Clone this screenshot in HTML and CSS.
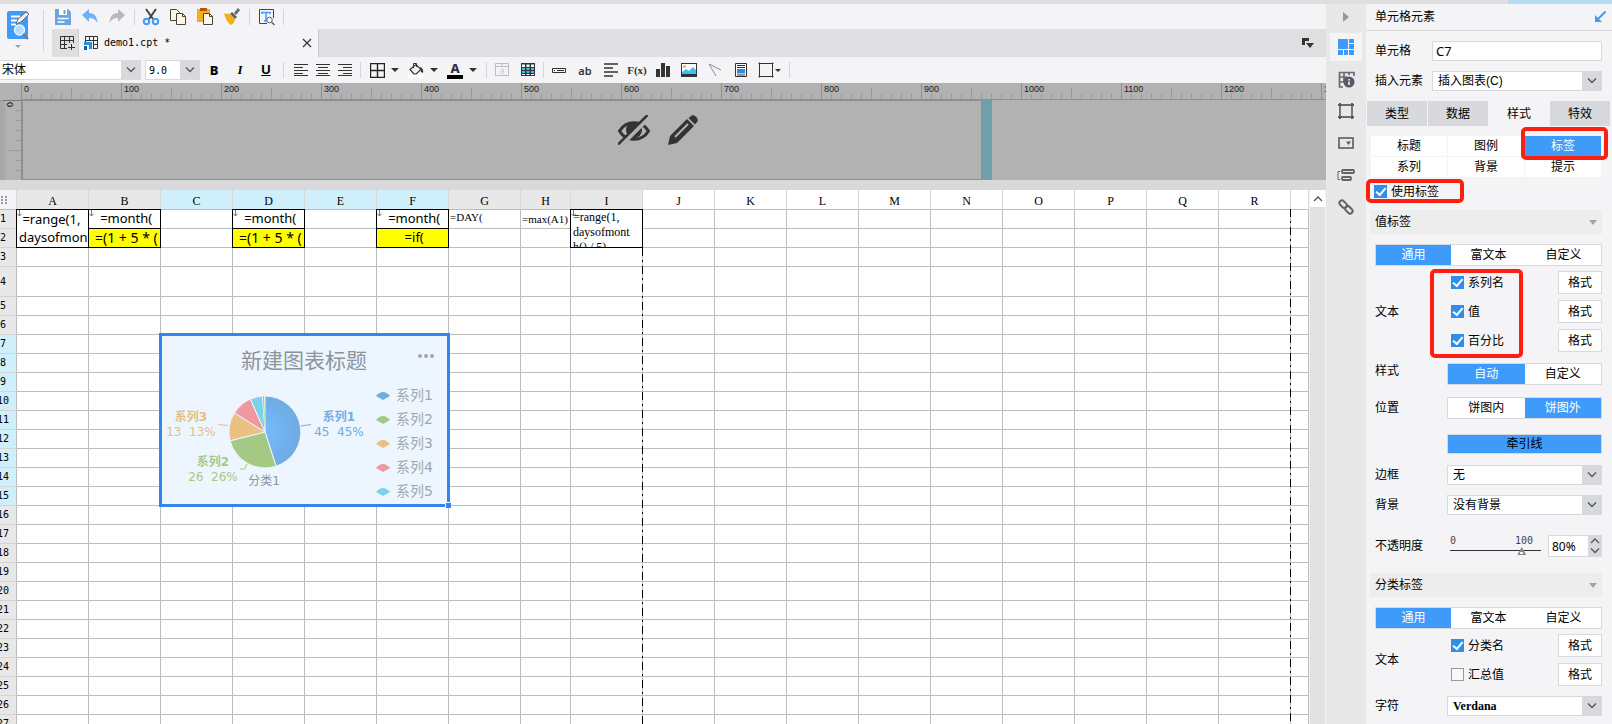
FILE: index.html
```html
<!DOCTYPE html>
<html lang="zh-CN">
<head>
<meta charset="utf-8">
<title>demo1.cpt</title>
<link rel="stylesheet" href="styles.css">
</head>
<body>
<div class="strip"><div class="strip-accent"></div></div>
<div class="app">
  <main class="editor">
    <header class="header">
      <button class="logo" aria-label="模板">
        <svg width="24" height="38" viewBox="0 0 24 38">
          <rect x="1" y="1" width="21" height="28" rx="2" fill="#3e9bfa"/>
          <path d="M5 6.500h9M5 10.500h7M5 14.500h5" stroke="#fff" stroke-width="2"/>
          <path d="M10 14l2-5 8-7 3 2-8 8z" fill="#f3f3f3" stroke="#666d75" stroke-width="1"/>
          <circle cx="13.500" cy="20" r="5" fill="#b9dbfb" stroke="#e9f3fd" stroke-width="1.500"/>
          <path d="M17 24l5 5" stroke="#6c7c8c" stroke-width="2"/>
          <path d="M9 35h6l-3 3z" fill="#9c9c9e"/>
        </svg>
      </button>
      <span class="sep sep-tall"></span>
      <div class="header-main">
        <div class="quickbar">
          <button class="tool" aria-label="保存"><svg width="18" height="18" viewBox="0 0 18 18"><path d="M1 1h13l3 3v13H1z" fill="#6aa5e2"/><path d="M5 1h8v6H5z" fill="#fff"/><path d="M9.500 2h2v4h-2z" fill="#6aa5e2"/><path d="M3.500 10.500h11M3.500 14h7" stroke="#fff" stroke-width="1.500"/></svg></button>
          <button class="tool" aria-label="撤销"><svg width="18" height="18" viewBox="0 0 18 18"><path d="M1 7l7-6v4c6 0 8 4 8.500 10C14 11 12 10 8 10v4z" fill="#6fb1f5"/></svg></button>
          <button class="tool" aria-label="重做"><svg width="18" height="18" viewBox="0 0 18 18"><path d="M17 7l-7-6v4c-6 0-8 4-8.500 10C4 11 6 10 10 10v4z" fill="#b9b9bb"/></svg></button>
          <span class="sep"></span>
          <button class="tool" aria-label="剪切"><svg width="18" height="18" viewBox="0 0 18 18"><path d="M4 1l7 10M14 1L7 11" stroke="#444" stroke-width="2"/><circle cx="4.500" cy="13.500" r="2.700" fill="none" stroke="#3e9bfa" stroke-width="2"/><circle cx="13.500" cy="13.500" r="2.700" fill="none" stroke="#3e9bfa" stroke-width="2"/></svg></button>
          <button class="tool" aria-label="复制"><svg width="18" height="18" viewBox="0 0 18 18" fill="#fff6df" stroke="#444"><path d="M1.500 1.500h6l3 3v8h-9z"/><path d="M7.500 5.500h6l3 3v8h-9z"/><path d="M13.500 5.500v3h3" fill="none"/></svg></button>
          <button class="tool" aria-label="粘贴"><svg width="18" height="18" viewBox="0 0 18 18"><path d="M1 1h13v13H1z" fill="#f2ae1c"/><path d="M4 0h7v3H4z" fill="#b35a0c"/><path d="M7.500 5.500h6l3 3v8h-9z" fill="#fff6df" stroke="#444"/><path d="M13.500 5.500v3h3" fill="none" stroke="#444"/></svg></button>
          <button class="tool" aria-label="格式刷"><svg width="18" height="18" viewBox="0 0 18 18"><path d="M12 6l4-5" stroke="#6b727c" stroke-width="3"/><path d="M9 4l5 5-2 2-5-5z" fill="#5a6068"/><path d="M1 5.500l6 .5 5 5c0 3-2 5-4 6-3-2-5-5-7-11.500z" fill="#f2ae1c"/></svg></button>
          <span class="sep"></span>
          <button class="tool" aria-label="预览"><svg width="18" height="18" viewBox="0 0 18 18"><path d="M16.500 10V1.500h-14v14H10" fill="none" stroke="#444"/><path d="M5 6V4.500h8V6M9 5v8M7 13h3" fill="none" stroke="#3e9bfa" stroke-width="1.500"/><circle cx="12.500" cy="12" r="2.800" fill="#f4f4f6" stroke="#666"/><path d="M14.500 14l3 3" stroke="#666" stroke-width="1.500"/></svg></button>
          <span class="sep"></span>
        </div>
        <div class="filebar">
          <button class="filenew" aria-label="新建"><svg width="16" height="16" viewBox="0 0 16 16" fill="none" stroke="#333"><path d="M14.500 8V1.500h-13v12H8M1.500 5.500h13M1.500 9.500H8M5.500 1.500v12M10.500 1.500V8M12.500 9v6M9 12.500h7"/></svg></button>
          <div class="filetab">
            <svg width="16" height="16" viewBox="0 0 16 16"><path d="M2 1.500h12.500v12H10M2 5.500h12.500M10 9.500h4.500M2.500 1v6M6.500 1v5M10.500 1v13" fill="none" stroke="#333"/><path d="M1 7h8v7H6v-4H1z" fill="#2a90d8"/><path d="M1 11h3v4H1z" fill="#155e98"/></svg>
            <span class="filename">demo1.cpt *</span>
            <button class="close" aria-label="关闭"><svg width="10" height="10" viewBox="0 0 10 10"><path d="M1 1l8 8M9 1l-8 8" stroke="#333" stroke-width="1.200"/></svg></button>
          </div>
          <button class="filemenu" aria-label="文件列表"><svg width="13" height="11" viewBox="0 0 13 11"><path d="M0 0h7v3H3v4H0z" fill="#333"/><path d="M4 5h8l-4 5z" fill="#333"/></svg></button>
        </div>
      </div>
    </header>

    <div class="formatbar">
      <span class="pick font-pick"><select aria-label="字体"><option>宋体</option></select><svg class="chev" width="10" height="6" viewBox="0 0 10 6"><path d="M1 .5l4 4 4-4"/></svg></span>
      <span class="pick size-pick"><select aria-label="字号"><option>9.0</option></select><svg class="chev" width="10" height="6" viewBox="0 0 10 6"><path d="M1 .5l4 4 4-4"/></svg></span>
      <button class="fmt"><b>B</b></button>
      <button class="fmt"><i>I</i></button>
      <button class="fmt"><u>U</u></button>
      <span class="sep"></span>
      <button class="fmt align" aria-label="左对齐"><svg width="14" height="12" viewBox="0 0 14 12"><path d="M0 .5h14M0 3.500h9M0 6.500h14M0 9.500h9M0 11.500h14" stroke="#333"/></svg></button>
      <button class="fmt align" aria-label="居中"><svg width="14" height="12" viewBox="0 0 14 12"><path d="M0 .5h14M2 3.500h10M0 6.500h14M2 9.500h10M0 11.500h14" stroke="#333"/></svg></button>
      <button class="fmt align" aria-label="右对齐"><svg width="14" height="12" viewBox="0 0 14 12"><path d="M0 .5h14M5 3.500h9M0 6.500h14M5 9.500h9M0 11.500h14" stroke="#333"/></svg></button>
      <span class="sep"></span>
      <button class="fmt split" aria-label="边框"><svg width="15" height="15" viewBox="0 0 15 15"><path d="M.5 .5h14v14H.5zM7.500 0v15M0 7.500h15" fill="none" stroke="#222" stroke-width="1.400"/></svg><span class="caret"></span></button>
      <button class="fmt split" aria-label="填充"><svg width="16" height="16" viewBox="0 0 16 16"><path d="M0 12.500h16V16H0z" fill="#fff"/><path d="M2 7.500l6-5 5 5-5 4.500H6z" fill="none" stroke="#333" stroke-width="1.200"/><path d="M5.500 6V1.500h3V5" fill="none" stroke="#333"/><path d="M12 5c3 1 3.500 4 3 6l-2-1z" fill="#333"/></svg><span class="caret"></span></button>
      <button class="fmt split" aria-label="字体颜色"><span class="fontcolor">A</span><span class="caret"></span></button>
      <span class="sep sep-gap"></span>
      <button class="fmt ins" aria-label="合并"><svg width="14" height="14" viewBox="0 0 14 14" fill="none" stroke="#bdbdbf"><path d="M.5 .5h13v12H.5zM0 3.500h14M7 0v3"/><path d="M5 6.500h3.500v4H5.500v-2h3" stroke="#d5d5d7"/></svg></button>
      <button class="fmt ins" aria-label="表格"><svg width="14" height="14" viewBox="0 0 14 14"><path d="M0 0h14v13H0z" fill="#333"/><path d="M1 1.500h3V4H1zM5.500 1.500h3V4h-3zM10 1.500h3V4h-3zM1 11h3v1H1zM5.500 11h3v1h-3zM10 11h3v1h-3z" fill="#fff"/><path d="M1 5h3v2H1zM5.500 5h3v2h-3zM10 5h3v2h-3zM1 8h3v2H1zM5.500 8h3v2h-3zM10 8h3v2h-3z" fill="#3fc0f5"/></svg></button>
      <span class="sep sep-gap"></span>
      <button class="fmt ins" aria-label="控件"><svg width="14" height="5" viewBox="0 0 14 5" fill="none" stroke="#333"><path d="M.5 .5h13v4H.5zM2 2.500h1M5 2.500h7"/></svg></button>
      <button class="fmt ins ab">ab</button>
      <button class="fmt ins" aria-label="富文本"><svg width="14" height="14" viewBox="0 0 14 14"><path d="M0 1h14M0 5h9M0 9h14M0 13h9" stroke="#333" stroke-width="1.600"/></svg></button>
      <button class="fmt ins fx">F(x)</button>
      <button class="fmt ins" aria-label="图表"><svg width="14" height="14" viewBox="0 0 14 14"><path d="M0 6h4v8H0zM5 0h4v14H5zM10 3h4v11h-4z" fill="#333"/></svg></button>
      <button class="fmt ins" aria-label="图片"><svg width="16" height="14" viewBox="0 0 16 14"><path d="M0 0h16v14H0z" fill="#333"/><path d="M1 1h14v9H1z" fill="#fff"/><path d="M1 11V9l4-3 3 2 4-4 3 3v4z" fill="#3fc0f5"/><circle cx="3.500" cy="3.500" r="1.500" fill="#f8b62c"/></svg></button>
      <button class="fmt ins" aria-label="斜线"><svg width="14" height="14" viewBox="0 0 14 14"><path d="M1 1l12 6M1 1l7 12" stroke="#8d8d90"/></svg></button>
      <button class="fmt ins" aria-label="子报表"><svg width="12" height="14" viewBox="0 0 12 14"><path d="M.5 .5h11v13H.5z" fill="#fff" stroke="#333"/><path d="M2 2.500h8M2 4.500h8M2 12h8" stroke="#333"/><path d="M2 6h8v4.500H2z" fill="#2d8ce0"/></svg></button>
      <button class="fmt ins last" aria-label="悬浮元素"><svg width="16" height="16" viewBox="0 0 16 16" fill="none" stroke="#333"><path d="M1.500 0v16M14.500 0v16M0 1.500h16M0 14.500h16" stroke="#888"/><path d="M1.500 1.500h13v13h-13z"/></svg><span class="caret small"></span></button>
      <span class="sep"></span>
    </div>

    <section class="banner">
      <div class="ruler-x">
        <span>0</span><span>100</span><span>200</span><span>300</span><span>400</span><span>500</span><span>600</span><span>700</span><span>800</span><span>900</span><span>1000</span><span>1100</span><span>1200</span><span>1300</span>
      </div>
      <div class="banner-body">
        <div class="ruler-y"><span>0</span></div>
        <div class="form-area">
          <button class="form-icon" aria-label="隐藏"><svg width="32" height="30" viewBox="0 0 32 30"><path d="M1.500 16C8 5 24 5 30.500 16 24 27 8 27 1.500 16z" fill="none" stroke="#333" stroke-width="3"/><circle cx="16" cy="15" r="8" fill="#333"/><path d="M2 31L31 2" stroke="#b2b2b2" stroke-width="5"/><path d="M0 29.500L29.500 0" stroke="#333" stroke-width="2.500"/></svg></button>
          <button class="form-icon" aria-label="编辑"><svg width="30" height="30" viewBox="0 0 30 30"><path d="M0 30l2-9L19 4l7 7L9 28z" fill="#333"/><path d="M7 22L20 9" stroke="#b2b2b2" stroke-width="2"/><path d="M20.500 3l3-2.300c3-1.500 7 2.300 6 5.800L27 9.500z" fill="#333"/></svg></button>
        </div>
        <div class="form-handle"></div>
      </div>
    </section>

    <section class="sheet">
      <div class="sheet-view">
        <table class="grid">
          <colgroup>
            <col class="c-num"><col class="c"><col class="c"><col class="c"><col class="c"><col class="c"><col class="c"><col class="c"><col class="c-h"><col class="c"><col class="c"><col class="c"><col class="c"><col class="c"><col class="c"><col class="c"><col class="c"><col class="c"><col class="c"><col>
          </colgroup>
          <thead>
            <tr>
              <th class="corner"><svg width="6" height="8" viewBox="0 0 6 8"><path d="M0 0h2v2H0zM4 0h2v2H4zM0 3h2v2H0zM4 3h2v2H4zM0 6h2v2H0zM4 6h2v2H4z" fill="#999"/></svg></th>
              <th class="used">A</th><th class="used">B</th><th class="hot">C</th><th class="hot">D</th><th class="hot">E</th><th class="hot">F</th><th class="used">G</th><th class="used">H</th><th class="used">I</th><th>J</th><th>K</th><th>L</th><th>M</th><th>N</th><th>O</th><th>P</th><th>Q</th><th>R</th><th></th>
            </tr>
          </thead>
          <tbody id="rows"></tbody>
        </table>
        <div class="page-break break-a"></div>
        <div class="page-break break-b"></div>
        <div class="chart">
          <svg class="chart-svg" viewBox="1 1 285 168" width="285" height="168">
            <defs><radialGradient id="blue" gradientUnits="userSpaceOnUse" cx="104" cy="97" r="36"><stop offset="0.1" stop-color="#74b8fb"/><stop offset="1" stop-color="#70abe2"/></radialGradient></defs>
            <text class="t-title" x="80" y="33">新建图表标题</text>
            <g fill="#a0a7ae"><circle cx="259" cy="21" r="2"/><circle cx="265" cy="21" r="2"/><circle cx="271" cy="21" r="2"/></g>
            <g stroke="#edf6fe" stroke-width="1">
              <path d="M104 97V61A36 36 0 0 1 115.100 131.200z" fill="url(#blue)"/>
              <path d="M104 97L115.100 131.200A36 36 0 0 1 69.100 105.700z" fill="#a4c985"/>
              <path d="M104 97L69.100 105.700A36 36 0 0 1 73.500 77.900z" fill="#eac083"/>
              <path d="M104 97L73.500 77.900A36 36 0 0 1 89.400 64.100z" fill="#ef98a0"/>
              <path d="M104 97L89.400 64.100A36 36 0 0 1 101.500 61.100z" fill="#7bd2ea"/>
            </g>
            <path d="M104 97L101.800 61.100A36 36 0 0 1 103.100 61z" fill="#a4c985"/>
            <g fill="none" stroke-width="1"><path d="M140 91l10-1.500" stroke="#70abe2"/><path d="M67 90.500l-10-1" stroke="#eac083"/><path d="M86 129l-2 5h-5" stroke="#a4c985"/></g>
            <g text-anchor="middle">
              <g fill="#73abe2"><text class="t-name" x="178" y="86">系列1</text><text class="t-val" x="178" y="101">45&#160; 45%</text></g>
              <g fill="#e8bd84"><text class="t-name" x="30" y="86">系列3</text><text class="t-val" x="30" y="101">13&#160; 13%</text></g>
              <g fill="#a4c985"><text class="t-name" x="52" y="131">系列2</text><text class="t-val" x="52" y="146">26&#160; 26%</text></g>
              <text class="t-cat" x="103" y="150">分类1</text>
            </g>
            <g>
              <path d="M215 61q7-8 14 0l-7 4z" fill="#70abe2"/><path d="M215 85q7-8 14 0l-7 4z" fill="#a4c985"/><path d="M215 109q7-8 14 0l-7 4z" fill="#eac083"/><path d="M215 133q7-8 14 0l-7 4z" fill="#ef98a0"/><path d="M215 157q7-8 14 0l-7 4z" fill="#7bd2ea"/>
            </g>
            <g class="t-legend"><text x="235" y="65">系列1</text><text x="235" y="89">系列2</text><text x="235" y="113">系列3</text><text x="235" y="137">系列4</text><text x="235" y="161">系列5</text></g>
          </svg>
          <span class="handle"></span>
        </div>
      </div>
      <div class="scrollbar"><button class="scroll-up" aria-label="向上"><svg class="chev" width="10" height="6" viewBox="0 0 10 6"><path d="M1 5l4-4 4 4"/></svg></button></div>
    </section>
  </main>

  <nav class="rail">
    <button class="rail-top" aria-label="收起"><svg width="6" height="10" viewBox="0 0 6 10"><path d="M0 0l6 5-6 5z" fill="#97979a"/></svg></button>
    <button class="rail-item on" aria-label="单元格元素"><svg width="16" height="16" viewBox="0 0 16 16" fill="#3e9bfa"><path d="M0 0h10v10H0zM11 0h5v4h-5zM11 5h5v5h-5zM0 11h5v5H0zM6 11h4v5H6zM11 11h5v5h-5z"/></svg></button>
    <button class="rail-item" aria-label="单元格属性"><svg width="17" height="17" viewBox="0 0 17 17"><path d="M1 1.500h15V5M1.500 1v15H5M1 6h8M1 11h5M6 1v10M11 1v3" fill="none" stroke="#666b76" stroke-width="1.700"/><circle cx="11" cy="11" r="5.500" fill="#555a64"/><path d="M11 8v1.500M11 10.500V14" stroke="#e8e8e8" stroke-width="1.700"/></svg></button>
    <button class="rail-item" aria-label="悬浮元素"><svg width="16" height="16" viewBox="0 0 16 16" fill="#555a64"><path d="M2 2h12v12H2z" fill="none" stroke="#666b76" stroke-width="1.800"/><path d="M0 1h3v2H0zM13 1h3v2h-3zM0 13h3v2H0zM13 13h3v2h-3zM1 0h2v3H1zM13 0h2v3h-2zM1 13h2v3H1zM13 13h2v3h-2z"/></svg></button>
    <button class="rail-item" aria-label="控件设置"><svg width="16" height="12" viewBox="0 0 16 12"><rect x="1" y="1" width="14" height="10" fill="none" stroke="#666b76" stroke-width="1.800"/><path d="M8 4.500h5L10.500 8z" fill="#555a64"/></svg></button>
    <button class="rail-item" aria-label="条件属性"><svg width="18" height="12" viewBox="0 0 18 12" fill="none" stroke="#5e636e" stroke-width="1.800"><path d="M3 2.500H1v8h2" stroke-width="1"/><rect x="5" y="1" width="12" height="3" rx="1"/><rect x="5" y="8" width="9" height="3" rx="1"/></svg></button>
    <button class="rail-item" aria-label="超级链接"><svg width="16" height="16" viewBox="0 0 16 16" fill="none" stroke="#5e636e" stroke-width="2"><rect x="1" y="2.500" width="8.500" height="5" rx="2.500" transform="rotate(45 5 5)"/><rect x="6.500" y="8.500" width="8.500" height="5" rx="2.500" transform="rotate(45 11 11)"/></svg></button>
  </nav>

  <aside class="panel">
    <div class="panel-head"><span>单元格元素</span><button class="pin" aria-label="停靠"><svg width="12" height="12" viewBox="0 0 12 12"><path d="M11.500 .5L4 8" stroke="#3e9bfa" stroke-width="2"/><path d="M1 4v7h7z" fill="#3e9bfa"/></svg></button></div>
    <div class="row row-top"><label for="cell">单元格</label><input id="cell" class="field cell-field" value="C7"></div>
    <div class="row row-top"><label for="elem">插入元素</label><span class="pick"><select id="elem"><option>插入图表(C)</option></select><svg class="chev" width="10" height="6" viewBox="0 0 10 6"><path d="M1 .5l4 4 4-4"/></svg></span></div>
    <div class="tabs"><button>类型</button><button>数据</button><button class="on">样式</button><button>特效</button></div>
    <div class="subtabs"><button>标题</button><button>图例</button><button class="on marked">标签</button><button>系列</button><button>背景</button><button>提示</button></div>
    <div class="use"><label class="check"><input type="checkbox" checked>使用标签</label></div>

    <h2 class="section">值标签<span class="fold"></span></h2>
    <div class="seg seg-wide"><button class="on">通用</button><button>富文本</button><button>自定义</button></div>
    <div class="group">
      <span class="group-name">文本</span>
      <div class="checks checks-marked"><label class="check"><input type="checkbox" checked>系列名</label><label class="check"><input type="checkbox" checked>值</label><label class="check"><input type="checkbox" checked>百分比</label></div>
      <div class="formats"><button>格式</button><button>格式</button><button>格式</button></div>
    </div>
    <div class="row row-style"><span class="raised">样式</span><div class="seg"><button class="on">自动</button><button>自定义</button></div></div>
    <div class="row row-pos"><span>位置</span><div class="seg"><button>饼图内</button><button class="on">饼图外</button></div></div>
    <div class="row row-lead"><span></span><button class="lead">牵引线</button></div>
    <div class="row row-box"><label for="border">边框</label><span class="pick"><select id="border"><option>无</option></select><svg class="chev" width="10" height="6" viewBox="0 0 10 6"><path d="M1 .5l4 4 4-4"/></svg></span></div>
    <div class="row row-box"><label for="bg">背景</label><span class="pick"><select id="bg"><option>没有背景</option></select><svg class="chev" width="10" height="6" viewBox="0 0 10 6"><path d="M1 .5l4 4 4-4"/></svg></span></div>
    <div class="row row-alpha">
      <label for="alpha">不透明度</label>
      <div class="alpha">
        <div class="slider"><div class="marks"><span>0</span><span>100</span></div><input id="alpha" type="range" min="0" max="100" value="82"></div>
        <div class="spin"><input aria-label="不透明度数值" value="80%"><div class="spin-btns"><button aria-label="增加"><svg class="chev" width="10" height="6" viewBox="0 0 10 6"><path d="M1 5l4-4 4 4"/></svg></button><button aria-label="减少"><svg class="chev" width="10" height="6" viewBox="0 0 10 6"><path d="M1 .5l4 4 4-4"/></svg></button></div></div>
      </div>
    </div>

    <h2 class="section section-next">分类标签<span class="fold"></span></h2>
    <div class="seg seg-wide"><button class="on">通用</button><button>富文本</button><button>自定义</button></div>
    <div class="group">
      <span class="group-name">文本</span>
      <div class="checks"><label class="check"><input type="checkbox" checked>分类名</label><label class="check"><input type="checkbox">汇总值</label></div>
      <div class="formats"><button>格式</button><button>格式</button></div>
    </div>
    <div class="row row-box"><label for="font">字符</label><span class="pick pick-serif"><select id="font"><option>Verdana</option></select><svg class="chev" width="10" height="6" viewBox="0 0 10 6"><path d="M1 .5l4 4 4-4"/></svg></span></div>
  </aside>
</div>
<script src="grid.js"></script>
</body>
</html>
```

FILE: styles.css
```css
* { box-sizing: border-box; }

body {
  margin: 0;
  height: 100vh;
  display: flex;
  flex-direction: column;
  overflow: hidden;
  background: #f4f4f7;
  color: #000;
  font: 12px/16px "Liberation Sans", "Noto Sans CJK SC", sans-serif;
}

button, input, select { font: inherit; color: inherit; margin: 0; }
button { padding: 0; border: 0; background: none; }
svg { display: block; flex: none; }

.strip { height: 4px; flex: none; background: #dfdfe1; display: flex; justify-content: flex-end; }
.strip-accent { width: 104px; background: #b6dcf3; }

.app { flex: 1; display: flex; min-height: 0; }
.editor { flex: 1; min-width: 0; display: flex; flex-direction: column; }

.sep { width: 1px; height: 16px; margin-left: 1px; background: #d5d5d8; flex: none; }
.chev { fill: none; stroke: #555; stroke-width: 1.3; }
.caret { border: 4px solid transparent; border-top-color: #333; border-bottom: 0; flex: none; }
.caret.small { border-width: 3px; border-bottom: 0; }

/* header */
.header { display: flex; height: 53px; flex: none; }
.logo { width: 43px; padding: 6px 0 0 6px; display: flex; align-items: flex-start; }
.sep-tall { height: 42px; margin: 6px 8px 0 0; }
.header-main { flex: 1; min-width: 0; }
.quickbar { height: 25px; display: flex; align-items: center; gap: 5px; }
.tool { width: 22px; display: flex; justify-content: center; }
.filebar { height: 28px; background: #dfdfe1; display: flex; align-items: stretch; }
.filenew { width: 27px; display: flex; align-items: center; justify-content: center; padding-left: 4px; border-right: 1px solid #cfcfd1; }
.filetab { width: 240px; display: flex; align-items: center; gap: 5px; padding: 0 6px 0 4px; background: #f4f4f7; border-right: 1px solid #c9c9cb; }
.filename { flex: 1; font: 10px/16px "DejaVu Sans Mono", monospace; }
.filemenu { margin: 0 11px 0 auto; }

/* format bar */
.formatbar { height: 26px; flex: none; display: flex; align-items: center; }
.pick { position: relative; display: block; height: 20px; }
.pick select {
  width: 100%; height: 20px; padding: 0 22px 0 5px;
  appearance: none; border: 1px solid #d8d9dc; border-radius: 0;
  background: linear-gradient(90deg, #fff calc(100% - 19px), #d8d9dc calc(100% - 19px));
}
.pick .chev { position: absolute; right: 5px; top: 7px; pointer-events: none; }
.font-pick { width: 141px; margin-right: 4px; }
.font-pick select { padding-left: 2px; border-left: 0; }
.size-pick { width: 55px; margin-right: 1px; }
.size-pick select { padding-left: 3px; font: 10px "DejaVu Sans Mono", monospace; }
.fmt { width: 26px; height: 20px; display: flex; align-items: center; justify-content: center; font-size: 13px; flex: none; }
.fmt b { font-family: "Noto Sans"; font-weight: 800; }
.fmt i { font-family: "Liberation Serif"; font-weight: 700; }
.fmt u { font-family: "Liberation Sans"; font-weight: 700; }
.formatbar > .sep { margin: 0 6px 0 4px; }
.align { width: 22px; }
.split { width: 34px; gap: 6px; margin-right: 5px; }
.formatbar > .sep-gap { margin: 0 2px; }
.fontcolor { width: 16px; border-bottom: 4px solid #000; font: 800 13px/13px "Noto Sans"; color: #333; }
.ab { font: 600 11px "Noto Sans"; color: #333; }
.fx { font: 700 11px "Liberation Serif"; color: #333; }
.last { width: 31px; gap: 1px; }

/* form banner */
.banner { flex: none; background: #b2b2b2; overflow: hidden; }
.ruler-x {
  height: 17px; margin-left: 21px; display: flex; overflow: hidden;
  border-bottom: 1px solid #8f8f8f;
  background:
    repeating-linear-gradient(90deg, #909090 0 1px, transparent 1px 100px),
    repeating-linear-gradient(90deg, #989898 0 1px, transparent 1px 50px) 0 5px / 100% 12px no-repeat,
    repeating-linear-gradient(90deg, #989898 0 1px, transparent 1px 10px) 0 11px / 100% 6px no-repeat;
}
.ruler-x span { flex: 0 0 100px; padding-left: 3px; font: 9px/13px "Liberation Sans", sans-serif; color: #222; }
.banner-body { display: flex; height: 80px; }
.ruler-y {
  width: 21px; border-left: 5px solid #a8a8a8; border-top: 1px solid #777; flex: none;
  background:
    repeating-linear-gradient(#989898 0 1px, transparent 1px 50px) 100% -1px / 12px 100% no-repeat,
    repeating-linear-gradient(#989898 0 1px, transparent 1px 10px) 100% -1px / 5px 100% no-repeat;
}
.ruler-y span { display: block; writing-mode: vertical-rl; transform: rotate(180deg); font: 9px/10px "Liberation Sans"; margin-top: 1px; }
.form-area { width: 961px; flex: none; border: 1px solid #8f8f8f; border-width: 1px 1px 1px 2px; display: flex; align-items: flex-start; gap: 18px; padding: 14px 0 0 595px; }
.form-handle { width: 10px; background: #6f9faa; }

/* sheet */
.sheet { flex: 1; min-height: 0; display: flex; border-top: 10px solid #d9d9db; }
.sheet-view { flex: 1; min-width: 0; position: relative; overflow: hidden; background: #fff; }
.grid { width: calc(100% + 10px); margin-left: -10px; table-layout: fixed; border-spacing: 0; }
.c-num { width: 27px; }
.c { width: 72px; }
.c-h { width: 50px; }
.grid th { height: 20px; padding: 3px 0 0; border-right: 1px solid #d8d8da; border-bottom: 1px solid #bdbdbd; font: 12px/14px "Liberation Serif", serif; overflow: hidden; }
.grid th.used { background: #e8e8e8; }
.grid th.hot { background: #cff0fb; }
.grid th.corner { background: #f4f4f7; padding: 0 0 0 11px; }
.grid tbody th { height: 19px; background: #e8e8e8; border-bottom-color: #d4d4d6; border-right-color: #bdbdbd; padding: 0; font: 10px/14px "DejaVu Sans Mono", monospace; }
.grid tbody th.hot { background: #cff0fb; }
.grid td { padding: 0; border-right: 1px solid #bdbdbd; border-bottom: 1px solid #bdbdbd; overflow: hidden; vertical-align: top; }
.grid .tall th { height: 30px; }
.grid td.boxed { border-color: #000; box-shadow: -1px 0 #000, 0 -1px #000, -1px -1px #000; position: relative; overflow: visible; }
.grid td.fill { background: #ff0; }
.cell { overflow: hidden; white-space: pre; height: 18px; font: 13px/17px "Noto Sans", sans-serif; }
.cell.mid { text-align: center; }
.cell.formula { padding-left: 6px; font-size: 14px; }
.cell.two { height: 37px; padding-left: 2px; line-height: 18px; }
.cell.mono { font: 11px/15px "Liberation Serif", serif; padding-left: 1px; }
.cell.two.mono { font-size: 12px; padding-left: 2px; }
.cell.low { padding-top: 2px; }
.expand { position: absolute; left: 0; top: 0; }

.page-break { position: absolute; top: 19px; bottom: 0; width: 1px; background: repeating-linear-gradient(#000 0 8px, #bdbdbd 8px 12px, #000 12px 14px, #bdbdbd 14px 18px); }
.break-a { left: 642px; top: 58px; }
.break-b { left: 1290px; }
.chart { position: absolute; left: 159px; top: 143px; border: 3px solid #3585f0; background: #edf6fe; }
.handle { position: absolute; right: -4px; bottom: -4px; width: 6px; height: 6px; background: #3585f0; border: 1px solid #edf6fe; border-width: 1px 0 0 1px; }
.chart text { font-family: "DejaVu Sans", "Noto Sans CJK SC", sans-serif; font-size: 12px; }
.chart .t-title { font-size: 21px; fill: #8c949c; }
.chart .t-name { font-weight: 700; }
.chart .t-cat { fill: #8c949c; }
.chart .t-legend text { font-size: 14px; fill: #a0a7ae; }

.scrollbar { width: 17px; flex: none; background: #e1e1e1; border: solid #f4f4f4; border-width: 0 1px; }
.scroll-up { width: 15px; height: 17px; background: #fff; display: flex; align-items: center; justify-content: center; }

/* icon rail */
.rail { width: 40px; flex: none; background: #e8e8e8; display: flex; flex-direction: column; align-items: center; gap: 4px; }
.rail-top { height: 25px; flex: none; display: flex; align-items: center; }
.rail-item { width: 32px; height: 28px; display: flex; align-items: center; justify-content: center; }
.rail-item.on { background: #f4f4f7; }

/* property panel */
.panel { width: 246px; flex: none; overflow: hidden; padding-right: 10px; }
.panel button { white-space: nowrap; }
.panel-head { height: 27px; margin-right: -10px; padding: 0 6px 0 9px; display: flex; align-items: center; justify-content: space-between; border-bottom: 1px solid #d8d9dc; }
.row { display: grid; grid-template-columns: 72px 1fr; align-items: center; margin-top: 10px; padding-left: 9px; }
.row-top { grid-template-columns: 57px 1fr; }
.raised { align-self: start; }
.field { height: 20px; min-width: 0; border: 1px solid #d8d9dc; background: #fff; padding: 0 3px; border-radius: 0; }
.cell-field { font: 13px "Noto Sans"; }
.panel .pick select { font-family: "Liberation Sans", "Noto Sans CJK SC", sans-serif; font-size: 12px; }
.panel .pick-serif select { font: 700 12px "Liberation Serif"; }

.tabs { display: grid; grid-template-columns: repeat(4, 1fr); gap: 1px; margin: 10px -8px 0 1px; }
.tabs button { height: 25px; background: #d8d9dc; }
.tabs .on { background: none; }
.subtabs { display: grid; grid-template-columns: repeat(3, 1fr); gap: 1px; margin: 10px 1px 0 5px; }
.subtabs button { height: 20px; background: #fff; }
.panel .subtabs .on, .panel .seg .on { background: #3e9bfa; color: #fff; }
.marked { position: relative; }
.marked::after { content: ""; position: absolute; inset: -9px -7px -4px -4px; border: 4px solid #fb2012; border-radius: 5px; }

.use { margin: 2px 0 0; width: 98px; height: 24px; padding: 1px 0 0 4px; display: flex; align-items: center; border: 4px solid #fb2012; border-radius: 5px; }
.check { display: flex; align-items: center; gap: 4px; }
.check input {
  appearance: none; width: 13px; height: 13px; border: 1px solid #999; background: #f8f8fa; flex: none;
}
.check input:checked { border-color: #2f8ee8; background: #2f8ee8; display: grid; place-items: center; }
.check input:checked::before { content: ""; width: 4px; height: 8px; border: solid #fff; border-width: 0 2px 2px 0; transform: rotate(40deg) translate(-1px, -1px); }

.section { height: 24px; margin: 7px 0 0 4px; padding: 0 5px; background: #ededed; font-size: 12px; font-weight: 400; line-height: 24px; display: flex; align-items: center; justify-content: space-between; }
.section-next { margin-top: 16px; }
.fold { border: 4px solid transparent; border-top: 5px solid #a3a3a3; border-bottom: 0; }
.seg { display: grid; grid-auto-flow: column; grid-auto-columns: 1fr; height: 22px; border: 1px solid #d8d9dc; background: #fff; }
.seg-wide { margin: 10px 0 0 9px; }
.group { display: grid; grid-template-columns: 76px 1fr 44px; align-items: center; margin-top: 5px; padding-left: 9px; }
.checks { position: relative; display: grid; gap: 6px; }
.checks .check { height: 23px; }
.checks-marked::after { content: ""; position: absolute; left: -21px; top: -2px; bottom: -6px; width: 85px; border: 4px solid #fb2012; border-radius: 5px; }
.formats { display: grid; gap: 6px; }
.formats button { height: 23px; border: 1px solid #d8d9dc; background: #fff; }
.row-pos { margin-top: 12px; }
.row-style { margin-top: 11px; }
.row-lead { margin-top: 15px; }
.lead { height: 20px; background: #3e9bfa; border: 1px solid #d8d9dc; }
.row-lead + .row-box { margin-top: 11px; }
.row-alpha { margin-top: 20px; }
.alpha { display: flex; justify-content: space-between; padding-left: 3px; }
.slider { width: 91px; height: 22px; }
.marks { display: flex; justify-content: space-between; padding-right: 8px; font: 10px/12px "DejaVu Sans Mono"; color: #444; }
.slider input { display: block; width: 91px; height: 8px; appearance: none; background: linear-gradient(#333, #333) 0 3px / 100% 1px no-repeat; }
.slider input::-webkit-slider-thumb { appearance: none; width: 9px; height: 8px; background: linear-gradient(#f4f4f7, #f4f4f7) 50% 5px / 3px 2px no-repeat, #888; clip-path: polygon(50% 0, 100% 100%, 0 100%); }
.spin { width: 54px; height: 22px; display: flex; border: 1px solid #d8d9dc; }
.spin > input { width: 39px; border: 0; padding: 0 3px; background: #fff; font: 12px "Noto Sans"; }
.spin-btns { flex: 1; display: grid; background: #d8d9dc; justify-items: center; align-items: center; }
```

FILE: grid.js
```js
const LAST_ROW = 27;
const COLS = 'ABCDEFGHIJKLMNOPQRS'.split('');
const ARROW = '<svg class="expand" width="5" height="7" viewBox="0 0 5 7"><path d="M2.500 0v6M0 3.500l2.500 2.500L5 3.500" fill="none" stroke="#777"/></svg>';

const cells = {
  A1: { cls: 'boxed', inner: 'two', text: ' =range(1,\ndaysofmon', span: 2, arrow: true },
  B1: { cls: 'boxed', inner: 'mid', text: ' =month(', arrow: true },
  B2: { cls: 'boxed fill', inner: 'formula', text: '=(1 + 5 * (' },
  D1: { cls: 'boxed', inner: 'mid', text: ' =month(', arrow: true },
  D2: { cls: 'boxed fill', inner: 'formula', text: '=(1 + 5 * (' },
  F1: { cls: 'boxed', inner: 'mid', text: ' =month(', arrow: true },
  F2: { cls: 'boxed fill', inner: 'mid', text: ' =if(' },
  G1: { inner: 'mono', text: '=DAY(' },
  H1: { inner: 'mono low', text: '=max(A1)' },
  I1: { cls: 'boxed', inner: 'two mono', text: '=range(1,\ndaysofmont\nh() / 5)', span: 2, arrow: true },
};

const body = document.getElementById('rows');
for (let r = 1; r <= LAST_ROW; r++) {
  const tr = document.createElement('tr');
  if (r === 4) tr.className = 'tall';
  let html = `<th class="${r >= 7 && r <= 15 ? 'hot' : ''}">${r}</th>`;
  for (const col of COLS) {
    if (r === 2 && (col === 'A' || col === 'I')) continue;
    const c = cells[col + r];
    html += c
      ? `<td class="${c.cls || ''}" rowspan="${c.span || 1}">${c.arrow ? ARROW : ''}<div class="cell ${c.inner}">${c.text}</div></td>`
      : '<td></td>';
  }
  tr.innerHTML = html;
  body.appendChild(tr);
}
```
